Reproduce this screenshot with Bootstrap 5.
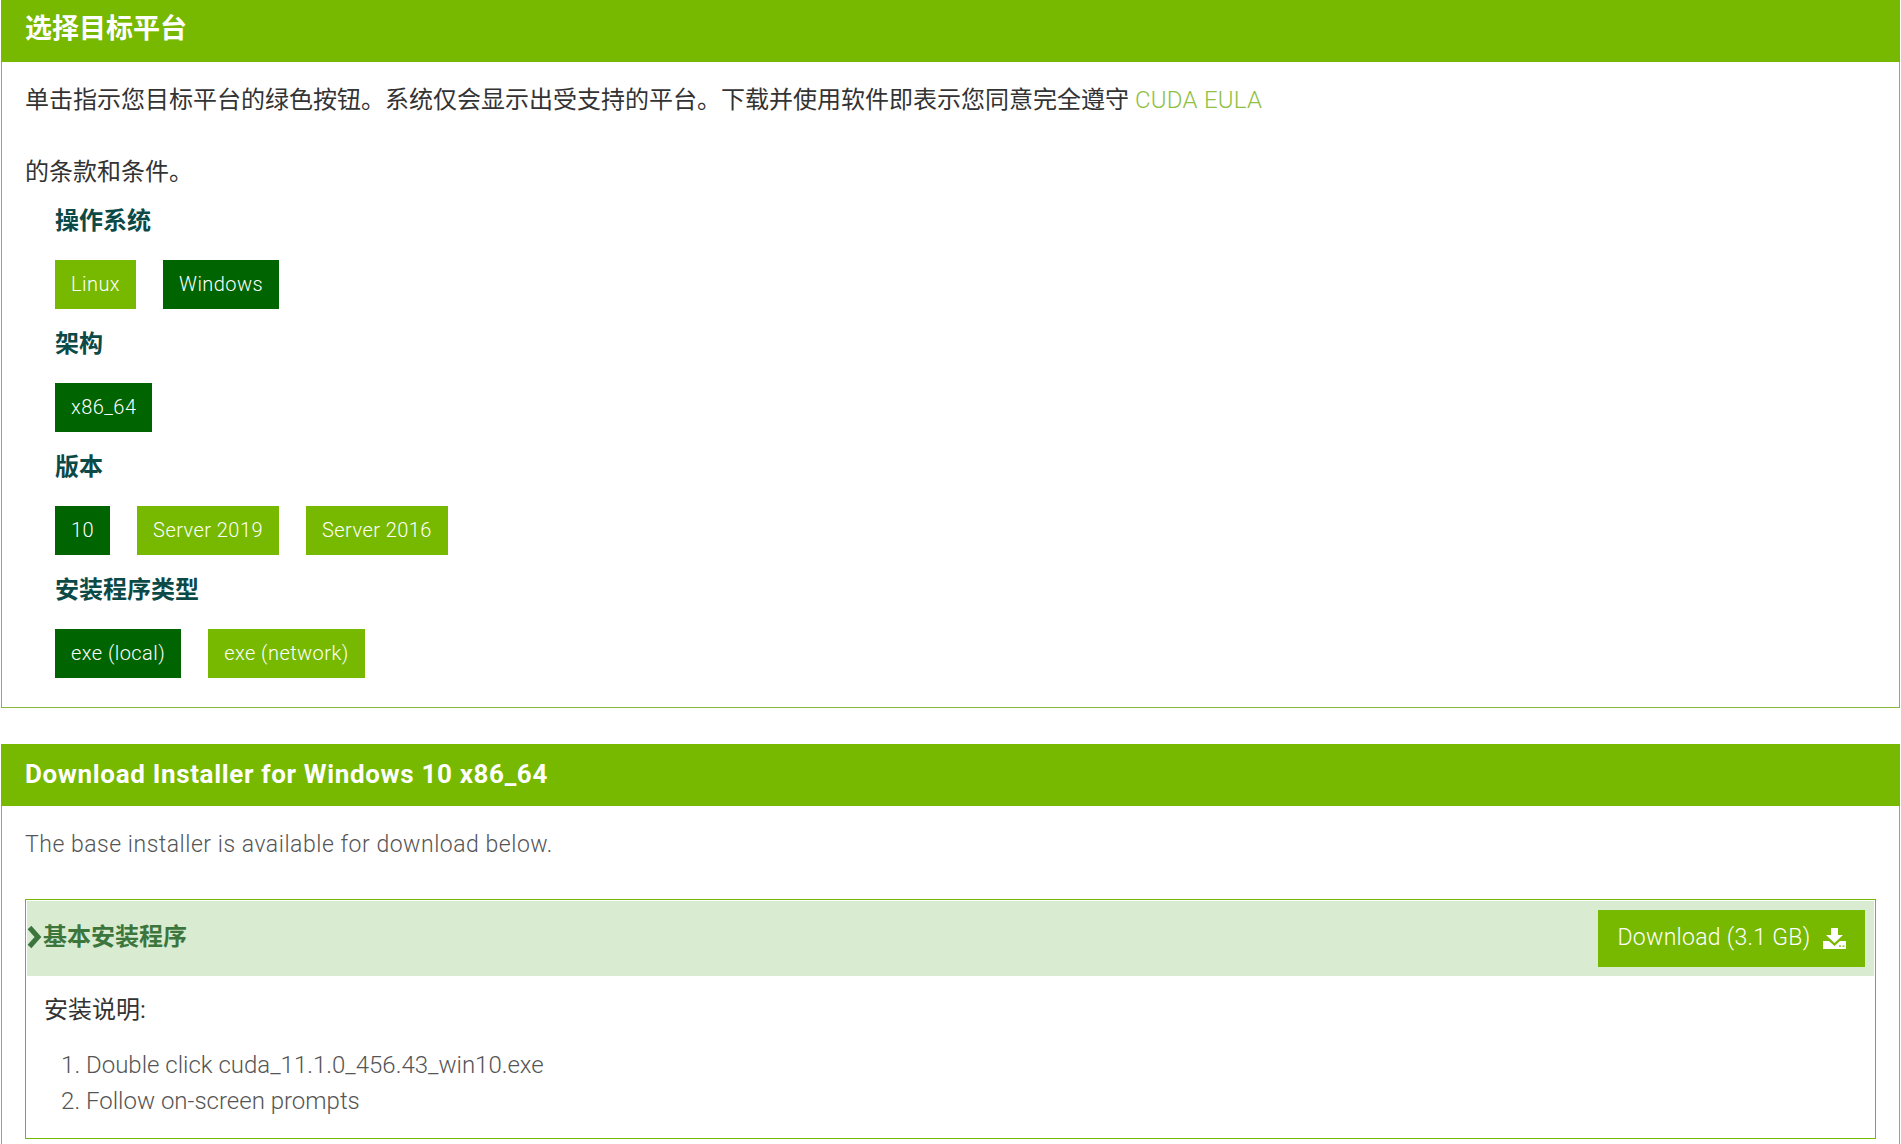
<!DOCTYPE html>
<html lang="zh-CN">
<head>
  <meta charset="UTF-8">
  <title>CUDA Toolkit</title>
  <link href="https://cdn.jsdelivr.net/npm/bootstrap@5.3.0/dist/css/bootstrap.min.css" rel="stylesheet">
  <style>
    body {
      font-family: Roboto, "Noto Sans CJK SC", sans-serif;
      font-weight: 300;
      color: #333;
      overflow: hidden;
    }
    .page-wrap { padding: 0 1px; }
    .picker-panel { border: 1px solid #8ab83e; border-top: 0; height: 708px; }
    .installer-panel { margin-top: 36px; border: 1px solid #8ab83e; border-top: 0; border-bottom: 0; height: 400px; }
    .panel-head {
      background: #76b900;
      color: #fff;
      height: 62px;
      margin: 0 -1px;
      padding: 0 24px;
      font-size: 27px;
      font-weight: 700;
      line-height: 58px;
    }
    .installer-panel .panel-head { font-size: 26px; letter-spacing: .65px; line-height: 60px; }
    .intro-text { margin: 0; padding: 2px 23px 0; font-size: 24px; font-weight: 400; line-height: 72px; height: 142px; }
    .intro-text a { color: #8fc043; text-decoration: none; font-weight: 300; letter-spacing: .25px; }
    .choice-group { padding-left: 53px; height: 123px; }
    .choice-label { font-size: 24px; font-weight: 700; color: #0b4a47; line-height: 34px; height: 56px; }
    .choice-row { column-gap: 27px; }
    .choice-btn {
      display: inline-block;
      height: 49px;
      padding: 0 16px;
      background: #76b900;
      color: #fff;
      font-size: 20px;
      letter-spacing: .45px;
      line-height: 49px;
    }
    .choice-btn.is-on { background: #006400; }
    .base-note { margin: 0; padding: 23px 23px 0; font-size: 23px; letter-spacing: .52px; line-height: 32px; color: #555; }
    .install-box { margin: 38px 23px 0; border: 1px solid #76b900; padding: 1px; height: 240px; }
    .install-head { background: #d9ecd1; height: 75px; color: #3c763d; padding-right: 9px; }
    .install-title { font-size: 24px; font-weight: 700; padding-bottom: 3px; }
    .get-btn {
      background: #76b900;
      color: #fff;
      width: 267px;
      height: 57px;
      font-size: 23px;
      letter-spacing: .3px;
    }
    .install-body { padding: 16px 17px 0; }
    .install-sub { font-size: 24px; font-weight: 400; line-height: 36px; color: #333; }
    .install-steps { margin: 19px 0 0; padding-left: 42px; font-size: 24px; line-height: 36px; color: #555; }
  </style>
</head>
<body>
  <div class="page-wrap">
    <div class="picker-panel">
      <div class="panel-head">选择目标平台</div>
      <p class="intro-text">单击指示您目标平台的绿色按钮。系统仅会显示出受支持的平台。下载并使用软件即表示您同意完全遵守 <a href="#">CUDA EULA</a><br>的条款和条件。</p>
      <div class="choice-group">
        <div class="choice-label">操作系统</div>
        <div class="d-flex choice-row">
          <span class="choice-btn">Linux</span>
          <span class="choice-btn is-on">Windows</span>
        </div>
      </div>
      <div class="choice-group">
        <div class="choice-label">架构</div>
        <div class="d-flex choice-row">
          <span class="choice-btn is-on">x86_64</span>
        </div>
      </div>
      <div class="choice-group">
        <div class="choice-label">版本</div>
        <div class="d-flex choice-row">
          <span class="choice-btn is-on">10</span>
          <span class="choice-btn">Server 2019</span>
          <span class="choice-btn">Server 2016</span>
        </div>
      </div>
      <div class="choice-group">
        <div class="choice-label">安装程序类型</div>
        <div class="d-flex choice-row">
          <span class="choice-btn is-on">exe (local)</span>
          <span class="choice-btn">exe (network)</span>
        </div>
      </div>
    </div>

    <div class="installer-panel">
      <div class="panel-head">Download Installer for Windows 10 x86_64</div>
      <p class="base-note">The base installer is available for download below.</p>
      <div class="install-box">
        <div class="install-head d-flex align-items-center justify-content-between">
          <div class="install-title d-flex align-items-center">
            <svg width="16" height="24" viewBox="0 0 16 24" fill="none" stroke="#3c763d" stroke-width="5"><path d="M2.500 2.500L11 12l-8.500 9.500"/></svg>
            <span>基本安装程序</span>
          </div>
          <div class="get-btn d-flex align-items-center justify-content-center gap-2">
            <span>Download (3.1 GB)</span>
            <svg class="ms-1" width="23" height="21" viewBox="0 0 23 21" fill="#fff"><path d="M8 0h7v7h5l-8.500 8L3 7h5z"/><path fill-rule="evenodd" d="M0 13h6l5.500 5 5.500-5h6v8H0zM16 17.500v1.200h2v-1.200zM19.500 17.500v1.200h2v-1.200z"/></svg>
          </div>
        </div>
        <div class="install-body">
          <div class="install-sub">安装说明:</div>
          <ol class="install-steps">
            <li>Double click cuda_11.1.0_456.43_win10.exe</li>
            <li>Follow on-screen prompts</li>
          </ol>
        </div>
      </div>
    </div>
  </div>
</body>
</html>
